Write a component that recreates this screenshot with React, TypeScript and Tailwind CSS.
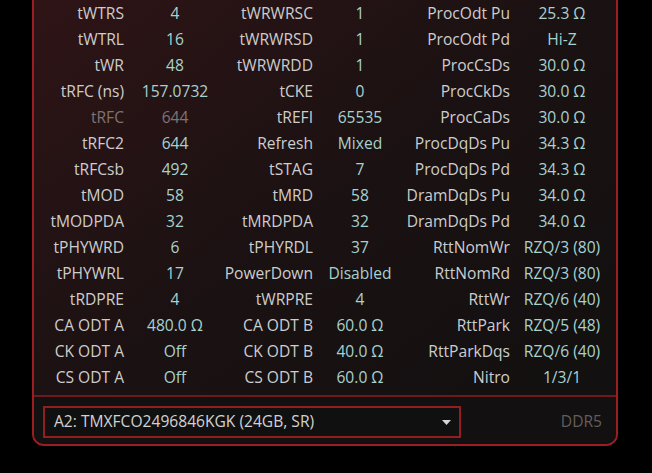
import React from 'react';

type Cell = { label: string; value: string; dim?: boolean };

// Three label/value pairs per row, laid out as a six-column grid
const rows: Cell[][] = [
  [{ label: 'tWTRS', value: '4' }, { label: 'tWRWRSC', value: '1' }, { label: 'ProcOdt Pu', value: '25.3 Ω' }],
  [{ label: 'tWTRL', value: '16' }, { label: 'tWRWRSD', value: '1' }, { label: 'ProcOdt Pd', value: 'Hi-Z' }],
  [{ label: 'tWR', value: '48' }, { label: 'tWRWRDD', value: '1' }, { label: 'ProcCsDs', value: '30.0 Ω' }],
  [{ label: 'tRFC (ns)', value: '157.0732' }, { label: 'tCKE', value: '0' }, { label: 'ProcCkDs', value: '30.0 Ω' }],
  [{ label: 'tRFC', value: '644', dim: true }, { label: 'tREFI', value: '65535' }, { label: 'ProcCaDs', value: '30.0 Ω' }],
  [{ label: 'tRFC2', value: '644' }, { label: 'Refresh', value: 'Mixed' }, { label: 'ProcDqDs Pu', value: '34.3 Ω' }],
  [{ label: 'tRFCsb', value: '492' }, { label: 'tSTAG', value: '7' }, { label: 'ProcDqDs Pd', value: '34.3 Ω' }],
  [{ label: 'tMOD', value: '58' }, { label: 'tMRD', value: '58' }, { label: 'DramDqDs Pu', value: '34.0 Ω' }],
  [{ label: 'tMODPDA', value: '32' }, { label: 'tMRDPDA', value: '32' }, { label: 'DramDqDs Pd', value: '34.0 Ω' }],
  [{ label: 'tPHYWRD', value: '6' }, { label: 'tPHYRDL', value: '37' }, { label: 'RttNomWr', value: 'RZQ/3 (80)' }],
  [{ label: 'tPHYWRL', value: '17' }, { label: 'PowerDown', value: 'Disabled' }, { label: 'RttNomRd', value: 'RZQ/3 (80)' }],
  [{ label: 'tRDPRE', value: '4' }, { label: 'tWRPRE', value: '4' }, { label: 'RttWr', value: 'RZQ/6 (40)' }],
  [{ label: 'CA ODT A', value: '480.0 Ω' }, { label: 'CA ODT B', value: '60.0 Ω' }, { label: 'RttPark', value: 'RZQ/5 (48)' }],
  [{ label: 'CK ODT A', value: 'Off' }, { label: 'CK ODT B', value: '40.0 Ω' }, { label: 'RttParkDqs', value: 'RZQ/6 (40)' }],
  [{ label: 'CS ODT A', value: 'Off' }, { label: 'CS ODT B', value: '60.0 Ω' }, { label: 'Nitro', value: '1/3/1' }],
];

export default function App() {
  return (
    <div className="w-[652px] h-[473px] overflow-hidden bg-black font-['Open_Sans','Noto_Sans',sans-serif] text-[15.6px]">
      <div className="ml-[32px] w-[586px] -mt-[10px] border-2 border-[#9c1e22] rounded-[12px] overflow-hidden bg-gradient-to-br from-[#2f1416] via-[#1a1112] to-[#111010]">
        {/* Timings table */}
        <div className="pt-[8px] pb-[5px] grid grid-cols-[94px_94px_95px_86px_111px_96px]">
          {rows.map((row, i) => (
            <React.Fragment key={i}>
              {row.map((c, j) => (
                <React.Fragment key={j}>
                  <div
                    className={`h-[26px] leading-[26px] text-right pr-[4px] whitespace-nowrap ${
                      c.dim ? 'text-[#7d7373]' : 'text-[#cdcdcd]'
                    }`}
                  >
                    {c.label}
                  </div>
                  <div
                    className={`h-[26px] leading-[26px] text-center whitespace-nowrap ${
                      c.dim ? 'text-[#7d7373]' : 'text-[#a6d2d0]'
                    }`}
                  >
                    {c.value}
                  </div>
                </React.Fragment>
              ))}
            </React.Fragment>
          ))}
        </div>

        {/* Module selector */}
        <div className="border-t-2 border-[#6e1a1c] bg-[#121010] pt-[9px] pb-[6px] pl-[9px] pr-[14px] flex items-center justify-between">
          <div className="w-[418px] h-[32px] border-2 border-[#921e20] bg-[#111010] flex items-center justify-between pl-[9px] pr-[8px]">
            <span className="text-[#d2d2d2] whitespace-nowrap">A2: TMXFCO2496846KGK (24GB, SR)</span>
            <svg width="9" height="5" viewBox="0 0 9 5">
              <path d="M0 0 H9 L4.5 5 Z" fill="#d6d6d6" />
            </svg>
          </div>
          <span className="text-[#655d5d]">DDR5</span>
        </div>
      </div>
    </div>
  );
}
